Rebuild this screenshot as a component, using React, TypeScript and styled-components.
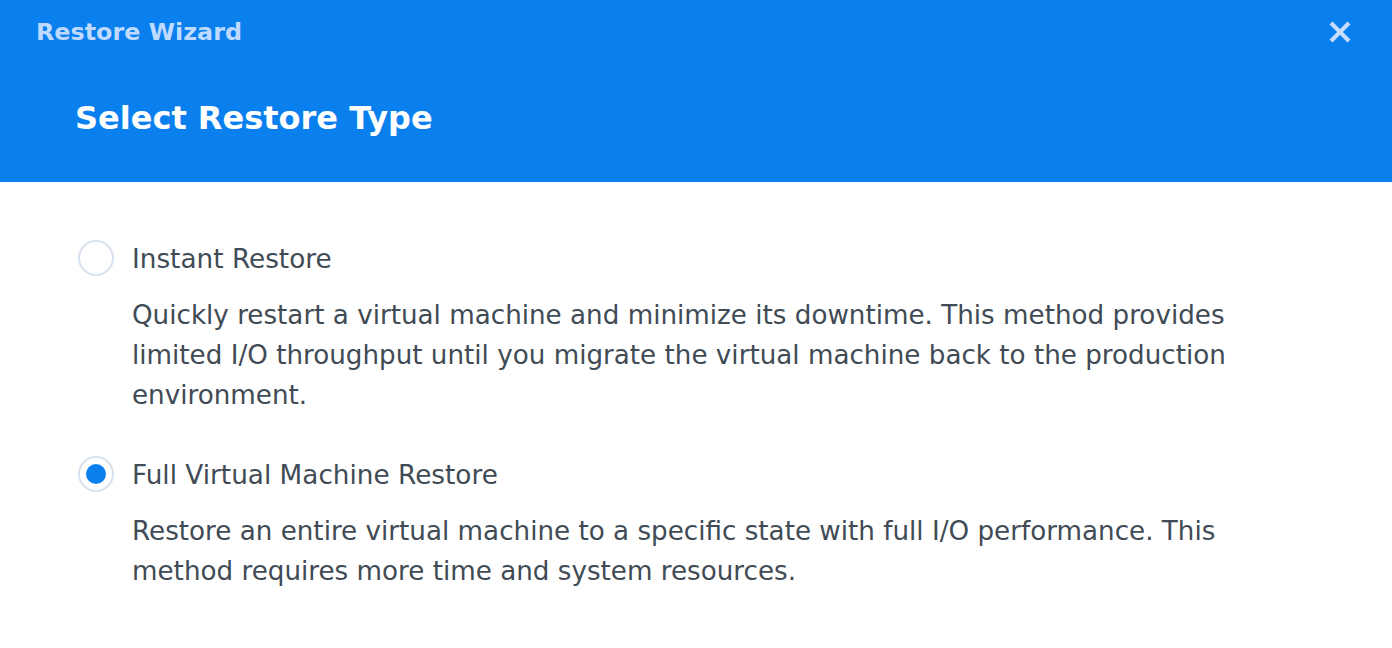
import React from 'react';
import styled, {createGlobalStyle} from 'styled-components';

const GlobalStyle = createGlobalStyle`
  html, body {
    margin: 0;
    padding: 0;
    background: #ffffff;
  }
`;

const Page = styled.div`
  width: 1392px;
  height: 648px;
  overflow: hidden;
  background: #ffffff;
  font-family: 'DejaVu Sans', sans-serif;
  color: #414b55;
`;

const Header = styled.header`
  height: 182px;
  box-sizing: border-box;
  background: #0a80ee;
  display: flex;
  flex-direction: column;
`;

const TitleBar = styled.div`
  display: flex;
  align-items: center;
  justify-content: space-between;
  padding: 16px 40px 0 36px;
  height: 31px;
`;

const WizardName = styled.div`
  font-size: 23.85px;
  font-weight: 700;
  color: #bfdaff;
`;

const CloseButton = styled.button`
  border: 0;
  padding: 0;
  background: none;
  display: flex;
  width: 24px;
  height: 24px;
`;

const StepTitle = styled.h1`
  margin: 51px 0 0 75px;
  font-size: 32px;
  line-height: 40px;
  font-weight: 700;
  color: #ffffff;
`;

const Options = styled.main`
  display: flex;
  flex-direction: column;
  gap: 39px;
  padding: 56px 0 0 78px;
`;

const Option = styled.section`
  display: flex;
  flex-direction: column;
  gap: 17px;
`;

const OptionRow = styled.label`
  display: flex;
  align-items: center;
  gap: 18px;
  height: 40px;
  font-size: 26.3px;
`;

const OptionName = styled.span`
  padding-top: 2px;
`;

const Radio = styled.span<{$checked?: boolean}>`
  width: 36px;
  height: 36px;
  box-sizing: border-box;
  border-radius: 50%;
  border: 2px solid #d8e2ee;
  background: #ffffff;
  display: flex;
  align-items: center;
  justify-content: center;

  &::after {
    content: '';
    display: ${p => (p.$checked ? 'block' : 'none')};
    width: 20px;
    height: 20px;
    border-radius: 50%;
    background: #0a80ee;
  }
`;

const Description = styled.p`
  margin: 0 0 0 54px;
  width: 1120px;
  font-size: 26.2px;
  line-height: 40px;
`;

export default function App() {
  return (
    <Page>
      <GlobalStyle />
      <Header>
        <TitleBar>
          <WizardName>Restore Wizard</WizardName>
          <CloseButton aria-label="Close">
            <svg width="24" height="24" viewBox="0 0 24 24">
              <path
                d="M3 3 L21 21 M21 3 L3 21"
                stroke="#c8deff"
                strokeWidth="4"
                fill="none"
              />
            </svg>
          </CloseButton>
        </TitleBar>
        <StepTitle>Select Restore Type</StepTitle>
      </Header>
      <Options>
        <Option>
          <OptionRow>
            <Radio />
            <OptionName>Instant Restore</OptionName>
          </OptionRow>
          <Description>
            Quickly restart a virtual machine and minimize its downtime. This
            method provides limited I/O throughput until you migrate the virtual
            machine back to the production environment.
          </Description>
        </Option>
        <Option>
          <OptionRow>
            <Radio $checked />
            <OptionName>Full Virtual Machine Restore</OptionName>
          </OptionRow>
          <Description>
            Restore an entire virtual machine to a specific state with full I/O
            performance. This method requires more time and system resources.
          </Description>
        </Option>
      </Options>
    </Page>
  );
}
